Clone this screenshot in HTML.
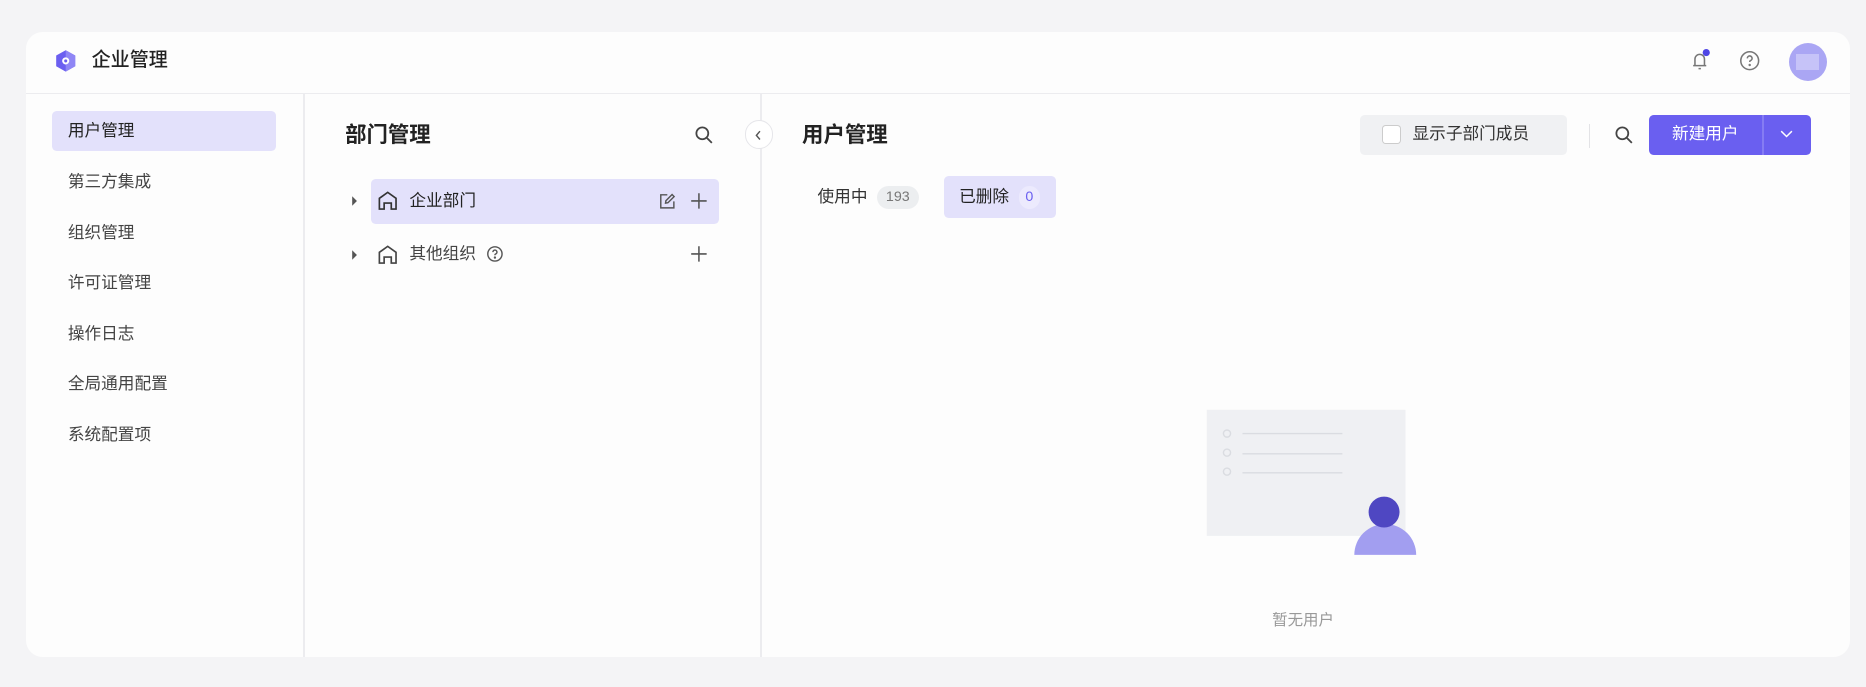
<!DOCTYPE html>
<html><head><meta charset="utf-8"><style>
*{margin:0;padding:0;box-sizing:border-box}
html,body{width:1866px;height:687px;overflow:hidden;background:#f4f4f6}
body{font-family:"Liberation Sans","Noto Sans CJK SC",sans-serif;color:#222}
#w{zoom:1.19;width:1568px;height:577px;position:relative}
.a{position:absolute}
.card{left:22px;top:27px;width:1533px;height:525px;background:#fdfdfd;border-radius:14px;overflow:hidden}
.t{position:absolute;white-space:nowrap;line-height:1}
.nav{left:57px;font-size:14px;color:#444}
</style></head><body><div id="w">
<div class="a card"></div>
<div class="a" style="left:22px;top:78px;width:1533px;height:1px;background:#ececef"></div>
<div class="a" style="left:255px;top:79px;width:1px;height:473px;background:#ececef"></div>
<div class="a" style="left:639px;top:79px;width:1px;height:473px;background:#ececef"></div>
<!-- logo -->
<svg class="a" style="left:46px;top:41px" width="18" height="20" viewBox="0 0 18 20"><path d="M9 1L17 5.5V14.5L9 19L1 14.5V5.5Z" fill="#6b5ff0"/><path d="M9 1L17 5.5V14.5L9 19Z" fill="#8f86f5"/><circle cx="9" cy="10" r="3" fill="#fff"/><circle cx="9" cy="10" r="1.3" fill="#6b5ff0"/></svg>
<div class="t" style="left:77px;top:43px;font-size:16px;font-weight:500;color:#222">企业管理</div>
<!-- header right -->
<svg class="a" style="left:1419px;top:41px" width="20" height="20" viewBox="0 0 20 20" fill="none" stroke="#777" stroke-width="1.3"><path d="M5 14V8.5a4 4 0 0 1 8 0V14M3.5 14h11M8 16.5h2"/><circle cx="14.5" cy="3" r="3" fill="#4f46e5" stroke="none"/></svg>
<svg class="a" style="left:1461px;top:42px" width="18" height="18" viewBox="0 0 18 18" fill="none" stroke="#777" stroke-width="1.3"><circle cx="9" cy="9" r="7.5"/><path d="M7 7a2 2 0 1 1 2.6 1.9c-.5.2-.6.6-.6 1.2"/><circle cx="9" cy="12.6" r=".4" fill="#777"/></svg>
<div class="a" style="left:1503px;top:36px;width:32px;height:32px;border-radius:50%;background:#aaa6f4;overflow:hidden"><div class="a" style="left:6px;top:9px;width:20px;height:14px;background:#c6c3f8"></div></div>
<!-- sidebar -->
<div class="a" style="left:44px;top:93px;width:188px;height:34px;background:#e3e1fb;border-radius:4px"></div>
<div class="t nav" style="top:103px;color:#222">用户管理</div>
<div class="t nav" style="top:146px">第三方集成</div>
<div class="t nav" style="top:189px">组织管理</div>
<div class="t nav" style="top:231px">许可证管理</div>
<div class="t nav" style="top:274px">操作日志</div>
<div class="t nav" style="top:316px">全局通用配置</div>
<div class="t nav" style="top:359px">系统配置项</div>
<!-- middle -->
<div class="t" style="left:290px;top:105px;font-size:18px;font-weight:600">部门管理</div>
<svg class="a" style="left:583px;top:105px" width="17" height="17" viewBox="0 0 17 17" fill="none" stroke="#444" stroke-width="1.5"><circle cx="7" cy="7" r="5"/><path d="M11 11l4 4"/></svg>
<div class="a" style="left:312px;top:150px;width:292px;height:38px;background:#e3e1fb;border-radius:4px"></div>
<svg class="a" style="left:295px;top:164px" width="6" height="10"><path d="M1 1l4 4-4 4z" fill="#555"/></svg>
<svg class="a" style="left:317px;top:160px" width="18" height="18" viewBox="0 0 18 18" fill="none" stroke="#333" stroke-width="1.4"><path d="M2 16V7l7-5 7 5v9h-4v-5H6v5z"/></svg>
<div class="t" style="left:344px;top:162px;font-size:14px;color:#222">企业部门</div>
<svg class="a" style="left:554px;top:162px" width="14" height="14" viewBox="0 0 14 14" fill="none" stroke="#555" stroke-width="1.2"><path d="M7 1.5H1.5v11h11V7"/><path d="M5.5 8.5l.3-2L11 1.3l1.7 1.7-5.2 5.2z"/></svg>
<svg class="a" style="left:580px;top:161px" width="15" height="15" fill="none" stroke="#555" stroke-width="1.3"><path d="M7.5 1v13M1 7.5h13"/></svg>
<svg class="a" style="left:295px;top:209px" width="6" height="10"><path d="M1 1l4 4-4 4z" fill="#555"/></svg>
<svg class="a" style="left:317px;top:205px" width="18" height="18" viewBox="0 0 18 18" fill="none" stroke="#444" stroke-width="1.4"><path d="M2 16V7l7-5 7 5v9h-4v-5H6v5z"/></svg>
<div class="t" style="left:344px;top:207px;font-size:14px;color:#444">其他组织</div>
<svg class="a" style="left:408px;top:206px" width="15" height="15" viewBox="0 0 15 15" fill="none" stroke="#555" stroke-width="1.2"><circle cx="7.5" cy="7.5" r="6"/><path d="M5.8 6a1.7 1.7 0 1 1 2.2 1.6c-.4.2-.5.5-.5 1"/><circle cx="7.5" cy="10.6" r=".4" fill="#555"/></svg>
<svg class="a" style="left:580px;top:206px" width="15" height="15" fill="none" stroke="#555" stroke-width="1.3"><path d="M7.5 1v13M1 7.5h13"/></svg>
<!-- collapse -->
<div class="a" style="left:626px;top:101px;width:24px;height:24px;border-radius:50%;background:#fff;border:1px solid #e6e6ea"></div>
<svg class="a" style="left:634px;top:109px" width="8" height="9" fill="none" stroke="#555" stroke-width="1.2"><path d="M5 1L2 4.5 5 8"/></svg>
<!-- right -->
<div class="t" style="left:674px;top:105px;font-size:18px;font-weight:600">用户管理</div>
<div class="a" style="left:1143px;top:97px;width:174px;height:33px;background:#f0f1f3;border-radius:4px"></div>
<div class="a" style="left:1161px;top:105px;width:16px;height:16px;background:#fff;border:1px solid #ccc;border-radius:3px"></div>
<div class="t" style="left:1187px;top:106px;font-size:14px;color:#333">显示子部门成员</div>
<div class="a" style="left:1335px;top:104px;width:1px;height:20px;background:#e3e3e6"></div>
<svg class="a" style="left:1356px;top:105px" width="17" height="17" viewBox="0 0 17 17" fill="none" stroke="#444" stroke-width="1.5"><circle cx="7" cy="7" r="5"/><path d="M11 11l4 4"/></svg>
<div class="a" style="left:1386px;top:97px;width:136px;height:33px;background:#6a5ff0;border-radius:4px"></div>
<div class="a" style="left:1481px;top:97px;width:1px;height:33px;background:#857cf3"></div>
<div class="t" style="left:1405px;top:106px;font-size:14px;color:#fff">新建用户</div>
<svg class="a" style="left:1496px;top:109px" width="11" height="7" fill="none" stroke="#fff" stroke-width="1.2"><path d="M1 1l4.5 4.5L10 1"/></svg>
<!-- tabs -->
<div class="t" style="left:687px;top:159px;font-size:14px;color:#333">使用中</div>
<div class="a" style="left:737px;top:156px;width:35px;height:20px;background:#eceef0;border-radius:10px;font-size:12px;color:#777;text-align:center;line-height:20px">193</div>
<div class="a" style="left:793px;top:148px;width:94px;height:35px;background:#e3e1fb;border-radius:4px"></div>
<div class="t" style="left:806px;top:159px;font-size:14px;color:#222">已删除</div>
<div class="a" style="left:856px;top:156px;width:18px;height:20px;background:#eceafd;border-radius:10px;font-size:12px;color:#6a5ff0;text-align:center;line-height:20px">0</div>
<!-- empty -->
<svg class="a" style="left:1010px;top:340px" width="190" height="130" viewBox="1010 340 190 130">
<rect x="1014" y="344" width="167" height="106" fill="#eff0f3"/>
<g fill="none" stroke="#dadce1" stroke-width="1.2"><circle cx="1031" cy="364" r="3"/><circle cx="1031" cy="380" r="3"/><circle cx="1031" cy="396" r="3"/><path d="M1044 364h84M1044 381h84M1044 397h84"/></g>
<path d="M1138 466a26 26 0 0 1 52 0z" fill="#a29ef0"/>
<circle cx="1163" cy="430" r="13" fill="#4f47c2"/>
</svg>
<div class="t" style="left:1069px;top:515px;font-size:13px;color:#999">暂无用户</div>
</div></body></html>
